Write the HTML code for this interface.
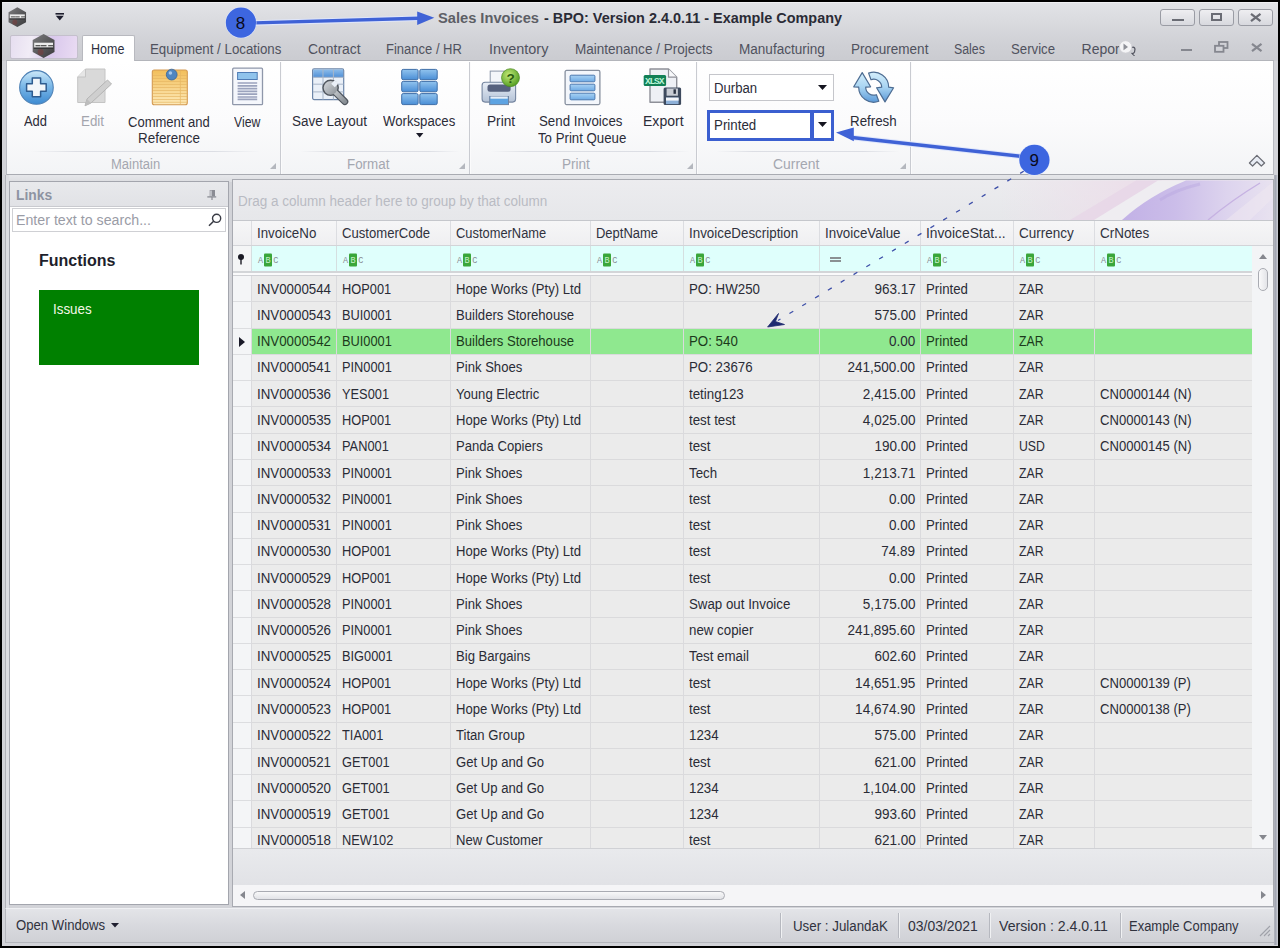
<!DOCTYPE html>
<html><head><meta charset="utf-8">
<style>
*{box-sizing:border-box;margin:0;padding:0}
html,body{width:1280px;height:948px;overflow:hidden;background:#000;font-family:"Liberation Sans",sans-serif;position:relative}
.a{position:absolute}
.t{position:absolute;white-space:nowrap}
svg{position:absolute;overflow:visible}
</style></head><body>
<div class="a" style="left:2px;top:2px;width:1276px;height:943.8px;background:#d2d3d8"></div>
<div class="a" style="left:2px;top:2px;width:1276px;height:59px;background:linear-gradient(#e2e3e7 0px,#d9dade 20px,#d0d1d6 40px,#cacbd0 59px);border-top:1px solid #f0f0f3"></div>
<div class="t" style="left:437.60px;top:10.65px;font-size:14px;line-height:14px;font-weight:bold;color:#5d5f66;transform:scaleX(1.0465);transform-origin:0 0;">Sales Invoices</div>
<div class="t" style="left:543.70px;top:10.65px;font-size:14px;line-height:14px;font-weight:bold;color:#2a2b36;transform:scaleX(1.0295);transform-origin:0 0;">- BPO: Version 2.4.0.11 - Example Company</div>
<div class="a" style="left:6px;top:60px;width:1268px;height:1px;background:#b3b5bb"></div>
<div class="a" style="left:10px;top:34.5px;width:68px;height:24px;border:1px solid #c4c0cc;border-radius:2px;background:linear-gradient(100deg,#e6def0 0%,#f1ecf6 30%,#d9c8ec 60%,#eadcf3 100%)"></div>
<div class="a" style="left:82px;top:34.7px;width:53px;height:27px;background:#fff;border:1px solid #b8b9bf;border-bottom:none;border-radius:2px 2px 0 0"></div>
<div class="t" style="left:90.60px;top:41.90px;font-size:14px;line-height:14px;font-weight:normal;color:#2e3040;transform:scaleX(0.8940);transform-origin:0 0;">Home</div>
<div class="t" style="left:150.30px;top:41.90px;font-size:14px;line-height:14px;font-weight:normal;color:#50525e;transform:scaleX(0.9478);transform-origin:0 0;">Equipment / Locations</div>
<div class="t" style="left:308.00px;top:41.90px;font-size:14px;line-height:14px;font-weight:normal;color:#50525e;transform:scaleX(0.9939);transform-origin:0 0;">Contract</div>
<div class="t" style="left:386.00px;top:41.90px;font-size:14px;line-height:14px;font-weight:normal;color:#50525e;transform:scaleX(0.9290);transform-origin:0 0;">Finance / HR</div>
<div class="t" style="left:489.40px;top:41.90px;font-size:14px;line-height:14px;font-weight:normal;color:#50525e;transform:scaleX(1.0314);transform-origin:0 0;">Inventory</div>
<div class="t" style="left:575.30px;top:41.90px;font-size:14px;line-height:14px;font-weight:normal;color:#50525e;transform:scaleX(0.9655);transform-origin:0 0;">Maintenance / Projects</div>
<div class="t" style="left:739.40px;top:41.90px;font-size:14px;line-height:14px;font-weight:normal;color:#50525e;transform:scaleX(0.9682);transform-origin:0 0;">Manufacturing</div>
<div class="t" style="left:851.00px;top:41.90px;font-size:14px;line-height:14px;font-weight:normal;color:#50525e;transform:scaleX(0.9656);transform-origin:0 0;">Procurement</div>
<div class="t" style="left:954.40px;top:41.90px;font-size:14px;line-height:14px;font-weight:normal;color:#50525e;transform:scaleX(0.8821);transform-origin:0 0;">Sales</div>
<div class="t" style="left:1011.00px;top:41.90px;font-size:14px;line-height:14px;font-weight:normal;color:#50525e;transform:scaleX(0.9424);transform-origin:0 0;">Service</div>
<div class="t" style="left:1081.60px;top:41.90px;font-size:14px;line-height:14px;font-weight:normal;color:#50525e;transform-origin:0 0;">Repor</div>
<div class="a" style="left:6px;top:61px;width:1268px;height:114px;background:linear-gradient(#ffffff 0px,#fbfbfc 60px,#f3f4f6 113px);border-left:1px solid #b9bbc2;border-right:1px solid #b9bbc2;border-bottom:1px solid #a9abb2"></div>
<div class="a" style="left:280.0px;top:62px;width:1px;height:112px;background:#c9cbd1"></div>
<div class="a" style="left:281.0px;top:62px;width:1px;height:112px;background:#fbfbfc"></div>
<div class="a" style="left:468.9px;top:62px;width:1px;height:112px;background:#c9cbd1"></div>
<div class="a" style="left:469.9px;top:62px;width:1px;height:112px;background:#fbfbfc"></div>
<div class="a" style="left:696.0px;top:62px;width:1px;height:112px;background:#c9cbd1"></div>
<div class="a" style="left:697.0px;top:62px;width:1px;height:112px;background:#fbfbfc"></div>
<div class="a" style="left:909.5px;top:62px;width:1px;height:112px;background:#c9cbd1"></div>
<div class="a" style="left:910.5px;top:62px;width:1px;height:112px;background:#fbfbfc"></div>
<div class="a" style="left:30px;top:151px;width:230px;height:1px;background:linear-gradient(90deg,rgba(220,222,228,0),#dcdee4 20%,#dcdee4 80%,rgba(220,222,228,0))"></div>
<div class="a" style="left:300px;top:151px;width:160px;height:1px;background:linear-gradient(90deg,rgba(220,222,228,0),#dcdee4 20%,#dcdee4 80%,rgba(220,222,228,0))"></div>
<div class="a" style="left:490px;top:151px;width:200px;height:1px;background:linear-gradient(90deg,rgba(220,222,228,0),#dcdee4 20%,#dcdee4 80%,rgba(220,222,228,0))"></div>
<div class="a" style="left:716px;top:151px;width:184px;height:1px;background:linear-gradient(90deg,rgba(220,222,228,0),#dcdee4 20%,#dcdee4 80%,rgba(220,222,228,0))"></div>
<div class="t" style="left:23.60px;top:113.95px;font-size:14px;line-height:14px;font-weight:normal;color:#2b2c38;transform:scaleX(0.9229);transform-origin:0 0;">Add</div>
<div class="t" style="left:80.70px;top:113.95px;font-size:14px;line-height:14px;font-weight:normal;color:#a3a5ad;transform:scaleX(0.9534);transform-origin:0 0;">Edit</div>
<div class="t" style="left:128.30px;top:114.55px;font-size:14px;line-height:14px;font-weight:normal;color:#2b2c38;transform:scaleX(0.9302);transform-origin:0 0;">Comment and</div>
<div class="t" style="left:138.10px;top:130.95px;font-size:14px;line-height:14px;font-weight:normal;color:#2b2c38;transform:scaleX(0.9583);transform-origin:0 0;">Reference</div>
<div class="t" style="left:233.50px;top:114.55px;font-size:14px;line-height:14px;font-weight:normal;color:#2b2c38;transform:scaleX(0.8739);transform-origin:0 0;">View</div>
<div class="t" style="left:110.80px;top:156.95px;font-size:14px;line-height:14px;font-weight:normal;color:#a4a7b0;transform:scaleX(0.9297);transform-origin:0 0;">Maintain</div>
<div class="t" style="left:291.70px;top:114.15px;font-size:14px;line-height:14px;font-weight:normal;color:#2b2c38;transform:scaleX(0.9635);transform-origin:0 0;">Save Layout</div>
<div class="t" style="left:383.00px;top:114.15px;font-size:14px;line-height:14px;font-weight:normal;color:#2b2c38;transform:scaleX(0.9416);transform-origin:0 0;">Workspaces</div>
<div class="t" style="left:347.00px;top:157.25px;font-size:14px;line-height:14px;font-weight:normal;color:#a4a7b0;transform:scaleX(0.9562);transform-origin:0 0;">Format</div>
<div class="t" style="left:486.50px;top:113.95px;font-size:14px;line-height:14px;font-weight:normal;color:#2b2c38;transform:scaleX(0.9758);transform-origin:0 0;">Print</div>
<div class="t" style="left:539.20px;top:113.95px;font-size:14px;line-height:14px;font-weight:normal;color:#2b2c38;transform:scaleX(0.9494);transform-origin:0 0;">Send Invoices</div>
<div class="t" style="left:538.00px;top:130.95px;font-size:14px;line-height:14px;font-weight:normal;color:#2b2c38;transform:scaleX(0.9455);transform-origin:0 0;">To Print Queue</div>
<div class="t" style="left:642.90px;top:113.95px;font-size:14px;line-height:14px;font-weight:normal;color:#2b2c38;transform:scaleX(1.0032);transform-origin:0 0;">Export</div>
<div class="t" style="left:561.60px;top:157.25px;font-size:14px;line-height:14px;font-weight:normal;color:#a4a7b0;transform:scaleX(0.9689);transform-origin:0 0;">Print</div>
<div class="t" style="left:849.60px;top:113.95px;font-size:14px;line-height:14px;font-weight:normal;color:#2b2c38;transform:scaleX(0.9525);transform-origin:0 0;">Refresh</div>
<div class="t" style="left:773.00px;top:157.25px;font-size:14px;line-height:14px;font-weight:normal;color:#a4a7b0;transform:scaleX(0.9938);transform-origin:0 0;">Current</div>
<div class="a" style="left:709px;top:74.2px;width:125px;height:26.4px;background:#fff;border:1px solid #c5c6cb"></div>
<div class="t" style="left:714.30px;top:80.65px;font-size:14px;line-height:14px;font-weight:normal;color:#2b2c38;transform:scaleX(0.9386);transform-origin:0 0;">Durban</div>
<div class="a" style="left:706.5px;top:109.6px;width:127.3px;height:31.4px;background:#fff;border:3px solid #3b5fd0"></div>
<div class="a" style="left:810.4px;top:110px;width:3.6px;height:30px;background:#3b5fd0"></div>
<div class="t" style="left:714.30px;top:118.15px;font-size:14px;line-height:14px;font-weight:normal;color:#2b2c38;transform:scaleX(0.9513);transform-origin:0 0;">Printed</div>
<svg style="left:818px;top:84.5px" width="10" height="6"><path d="M0 0H9L4.5 5Z" fill="#15151f"/></svg>
<svg style="left:818px;top:122px" width="10" height="6"><path d="M0 0H9L4.5 5Z" fill="#15151f"/></svg>
<div class="a" style="left:6px;top:175px;width:1268px;height:7px;background:linear-gradient(#e6e7ea,#dcdde1)"></div>
<div class="a" style="left:5px;top:175px;width:1px;height:733px;background:#b0b2b8"></div>
<div class="a" style="left:6px;top:175px;width:3.4px;height:733px;background:#dcdde2"></div>
<div class="a" style="left:1274px;top:175px;width:4px;height:770px;background:linear-gradient(90deg,#b4b6be,#a2a6b2 40%,#cfd1d8)"></div>
<div class="a" style="left:9.4px;top:181.4px;width:219.6px;height:724px;background:#fff;border:1px solid #a3a5ad"></div>
<div class="a" style="left:10.4px;top:182.4px;width:217.6px;height:25px;background:linear-gradient(#e8e9ec,#e1e2e6);border-bottom:1px solid #c9cacf"></div>
<div class="t" style="left:16.40px;top:187.75px;font-size:14px;line-height:14px;font-weight:bold;color:#8d93a2;transform:scaleX(0.9869);transform-origin:0 0;">Links</div>
<div class="a" style="left:11.7px;top:208px;width:214.5px;height:23.5px;background:#fff;border:1px solid #cfd0d4"></div>
<div class="t" style="left:16.00px;top:212.85px;font-size:14px;line-height:14px;font-weight:normal;color:#9a9ca6;transform:scaleX(1.0146);transform-origin:0 0;">Enter text to search...</div>
<div class="t" style="left:38.50px;top:252.66px;font-size:16px;line-height:16px;font-weight:bold;color:#1e1f2c;transform:scaleX(1.0008);transform-origin:0 0;">Functions</div>
<div class="a" style="left:38.8px;top:289.9px;width:160px;height:74.8px;background:#008000"></div>
<div class="t" style="left:53.30px;top:301.95px;font-size:14px;line-height:14px;font-weight:normal;color:#f4f7e6;transform:scaleX(0.9563);transform-origin:0 0;">Issues</div>
<div class="a" style="left:5px;top:908.4px;width:1269px;height:34.4px;background:linear-gradient(#e3e4e8,#d6d7dc 60%,#d0d1d6);border-top:1px solid #eff0f3;border-left:1px solid #b4b6bc;border-bottom:1px solid #b4b6bc"></div>
<div class="t" style="left:15.80px;top:918.25px;font-size:14px;line-height:14px;font-weight:normal;color:#30323e;transform:scaleX(0.9396);transform-origin:0 0;">Open Windows</div>
<svg style="left:110.5px;top:922.5px" width="9" height="6"><path d="M0 0H8L4 4.5Z" fill="#202030"/></svg>
<div class="a" style="left:231.6px;top:179.4px;width:1042.6px;height:727.6px;background:#e9e9ec;border:1px solid #a8aab1"></div>
<div class="a" style="left:232.6px;top:180.4px;width:1040.6px;height:40px;background:linear-gradient(#ececef,#e6e7ea)"></div>
<svg style="left:0;top:0" width="1280" height="230">
<defs><linearGradient id="pk" x1="0" y1="0" x2="1" y2="0"><stop offset="0" stop-color="#ecdfea" stop-opacity="0"/><stop offset="0.5" stop-color="#ecdfea"/><stop offset="1" stop-color="#ece2ee"/></linearGradient>
<linearGradient id="pu" x1="1122" y1="0" x2="1273" y2="0" gradientUnits="userSpaceOnUse"><stop offset="0" stop-color="#c2b1e6"/><stop offset="0.35" stop-color="#cbbde9"/><stop offset="0.7" stop-color="#ddd4ee"/><stop offset="1" stop-color="#e8e2f0"/></linearGradient></defs>
<rect x="1000" y="180.4" width="273" height="39.6" fill="url(#pk)"/>
<polygon points="1070,220 1096,220 1162,180.4 1136,180.4" fill="#e6d2e6" opacity="0.55"/>
<polygon points="1094,220 1122,220 1186,180.4 1158,180.4" fill="#efedf1"/>
<path d="M1122 220 Q1148 196 1186 180.4 L1273 180.4 L1273 220 Z" fill="url(#pu)"/>
<path d="M1160 200 Q1175 190 1200 184" stroke="#b9a6e0" stroke-width="3" fill="none" opacity="0.45"/>
<path d="M1208 220 Q1232 200 1260 183" stroke="#c6b2e2" stroke-width="1.4" fill="none"/>
<polygon points="1226,220 1250,220 1273,198 1273,182" fill="#efe8f1" opacity="0.55"/>
</svg>
<div class="t" style="left:238.00px;top:194.15px;font-size:14px;line-height:14px;font-weight:normal;color:#b9bbc3;transform:scaleX(0.9646);transform-origin:0 0;">Drag a column header here to group by that column</div>
<div class="a" style="left:232.6px;top:220px;width:1040.6px;height:1px;background:#c5c7cc"></div>
<div class="a" style="left:232.6px;top:221px;width:1040.6px;height:24px;background:linear-gradient(#f6f6f7,#efeff1)"></div>
<div class="a" style="left:232.6px;top:244.8px;width:1040.6px;height:1px;background:#d3d4d8"></div>
<div class="t" style="left:257.30px;top:226.05px;font-size:14px;line-height:14px;font-weight:normal;color:#30323e;transform:scaleX(0.9524);transform-origin:0 0;">InvoiceNo</div>
<div class="t" style="left:342.40px;top:226.05px;font-size:14px;line-height:14px;font-weight:normal;color:#30323e;transform:scaleX(0.9357);transform-origin:0 0;">CustomerCode</div>
<div class="t" style="left:455.80px;top:226.05px;font-size:14px;line-height:14px;font-weight:normal;color:#30323e;transform:scaleX(0.9201);transform-origin:0 0;">CustomerName</div>
<div class="t" style="left:596.10px;top:226.05px;font-size:14px;line-height:14px;font-weight:normal;color:#30323e;transform:scaleX(0.9265);transform-origin:0 0;">DeptName</div>
<div class="t" style="left:689.40px;top:226.05px;font-size:14px;line-height:14px;font-weight:normal;color:#30323e;transform:scaleX(0.9546);transform-origin:0 0;">InvoiceDescription</div>
<div class="t" style="left:824.80px;top:226.05px;font-size:14px;line-height:14px;font-weight:normal;color:#30323e;transform:scaleX(0.9540);transform-origin:0 0;">InvoiceValue</div>
<div class="t" style="left:926.10px;top:226.05px;font-size:14px;line-height:14px;font-weight:normal;color:#30323e;transform:scaleX(0.9835);transform-origin:0 0;">InvoiceStat...</div>
<div class="t" style="left:1019.40px;top:226.05px;font-size:14px;line-height:14px;font-weight:normal;color:#30323e;transform:scaleX(0.9648);transform-origin:0 0;">Currency</div>
<div class="t" style="left:1099.60px;top:226.05px;font-size:14px;line-height:14px;font-weight:normal;color:#30323e;transform:scaleX(0.9599);transform-origin:0 0;">CrNotes</div>
<div class="a" style="left:251.2px;top:221px;width:1px;height:24px;background:#dcdde1"></div>
<div class="a" style="left:336.3px;top:221px;width:1px;height:24px;background:#dcdde1"></div>
<div class="a" style="left:449.7px;top:221px;width:1px;height:24px;background:#dcdde1"></div>
<div class="a" style="left:590.0px;top:221px;width:1px;height:24px;background:#dcdde1"></div>
<div class="a" style="left:683.3px;top:221px;width:1px;height:24px;background:#dcdde1"></div>
<div class="a" style="left:818.7px;top:221px;width:1px;height:24px;background:#dcdde1"></div>
<div class="a" style="left:920.0px;top:221px;width:1px;height:24px;background:#dcdde1"></div>
<div class="a" style="left:1013.3px;top:221px;width:1px;height:24px;background:#dcdde1"></div>
<div class="a" style="left:1093.5px;top:221px;width:1px;height:24px;background:#dcdde1"></div>
<div class="a" style="left:232.6px;top:245.8px;width:1019.7px;height:25.2px;background:#dffffc"></div>
<div class="a" style="left:232.6px;top:245.8px;width:19px;height:25.2px;background:#f4f5f6"></div>
<div class="a" style="left:251.2px;top:245.8px;width:1px;height:25.2px;background:#d5dfe0"></div>
<div class="a" style="left:336.3px;top:245.8px;width:1px;height:25.2px;background:#d5dfe0"></div>
<div class="a" style="left:449.7px;top:245.8px;width:1px;height:25.2px;background:#d5dfe0"></div>
<div class="a" style="left:590.0px;top:245.8px;width:1px;height:25.2px;background:#d5dfe0"></div>
<div class="a" style="left:683.3px;top:245.8px;width:1px;height:25.2px;background:#d5dfe0"></div>
<div class="a" style="left:818.7px;top:245.8px;width:1px;height:25.2px;background:#d5dfe0"></div>
<div class="a" style="left:920.0px;top:245.8px;width:1px;height:25.2px;background:#d5dfe0"></div>
<div class="a" style="left:1013.3px;top:245.8px;width:1px;height:25.2px;background:#d5dfe0"></div>
<div class="a" style="left:1093.5px;top:245.8px;width:1px;height:25.2px;background:#d5dfe0"></div>
<div class="a" style="left:232.6px;top:271px;width:1019.7px;height:5.3px;background:#fafafb;border-top:2.6px solid #d3d5d8;border-bottom:1px solid #d0d1d5"></div>
<svg style="left:237px;top:254px" width="8" height="11"><circle cx="4" cy="3" r="3" fill="#1a1a24"/><path d="M3.3 5 H4.7 V10 L4 11 L3.3 10Z" fill="#1a1a24"/></svg>
<svg style="left:258.2px;top:253px" width="22" height="14" viewBox="0 0 22 14"><text x="0" y="10.3" font-family="Liberation Mono" font-size="8.5" fill="#8a8c92">A</text><rect x="6" y="0.5" width="8" height="13" rx="1" fill="#3aa63a"/><text x="7.4" y="10.3" font-family="Liberation Mono" font-size="8.5" fill="#c8f0c8">B</text><text x="15.2" y="10.3" font-family="Liberation Mono" font-size="8.5" fill="#8a8c92">C</text></svg>
<svg style="left:343.3px;top:253px" width="22" height="14" viewBox="0 0 22 14"><text x="0" y="10.3" font-family="Liberation Mono" font-size="8.5" fill="#8a8c92">A</text><rect x="6" y="0.5" width="8" height="13" rx="1" fill="#3aa63a"/><text x="7.4" y="10.3" font-family="Liberation Mono" font-size="8.5" fill="#c8f0c8">B</text><text x="15.2" y="10.3" font-family="Liberation Mono" font-size="8.5" fill="#8a8c92">C</text></svg>
<svg style="left:456.7px;top:253px" width="22" height="14" viewBox="0 0 22 14"><text x="0" y="10.3" font-family="Liberation Mono" font-size="8.5" fill="#8a8c92">A</text><rect x="6" y="0.5" width="8" height="13" rx="1" fill="#3aa63a"/><text x="7.4" y="10.3" font-family="Liberation Mono" font-size="8.5" fill="#c8f0c8">B</text><text x="15.2" y="10.3" font-family="Liberation Mono" font-size="8.5" fill="#8a8c92">C</text></svg>
<svg style="left:597.0px;top:253px" width="22" height="14" viewBox="0 0 22 14"><text x="0" y="10.3" font-family="Liberation Mono" font-size="8.5" fill="#8a8c92">A</text><rect x="6" y="0.5" width="8" height="13" rx="1" fill="#3aa63a"/><text x="7.4" y="10.3" font-family="Liberation Mono" font-size="8.5" fill="#c8f0c8">B</text><text x="15.2" y="10.3" font-family="Liberation Mono" font-size="8.5" fill="#8a8c92">C</text></svg>
<svg style="left:690.3px;top:253px" width="22" height="14" viewBox="0 0 22 14"><text x="0" y="10.3" font-family="Liberation Mono" font-size="8.5" fill="#8a8c92">A</text><rect x="6" y="0.5" width="8" height="13" rx="1" fill="#3aa63a"/><text x="7.4" y="10.3" font-family="Liberation Mono" font-size="8.5" fill="#c8f0c8">B</text><text x="15.2" y="10.3" font-family="Liberation Mono" font-size="8.5" fill="#8a8c92">C</text></svg>
<div class="a" style="left:829.8px;top:257.3px;width:11.3px;height:1.6px;background:#8a9092"></div>
<div class="a" style="left:829.8px;top:260.1px;width:11.3px;height:1.6px;background:#8a9092"></div>
<svg style="left:927.0px;top:253px" width="22" height="14" viewBox="0 0 22 14"><text x="0" y="10.3" font-family="Liberation Mono" font-size="8.5" fill="#8a8c92">A</text><rect x="6" y="0.5" width="8" height="13" rx="1" fill="#3aa63a"/><text x="7.4" y="10.3" font-family="Liberation Mono" font-size="8.5" fill="#c8f0c8">B</text><text x="15.2" y="10.3" font-family="Liberation Mono" font-size="8.5" fill="#8a8c92">C</text></svg>
<svg style="left:1020.3px;top:253px" width="22" height="14" viewBox="0 0 22 14"><text x="0" y="10.3" font-family="Liberation Mono" font-size="8.5" fill="#8a8c92">A</text><rect x="6" y="0.5" width="8" height="13" rx="1" fill="#3aa63a"/><text x="7.4" y="10.3" font-family="Liberation Mono" font-size="8.5" fill="#c8f0c8">B</text><text x="15.2" y="10.3" font-family="Liberation Mono" font-size="8.5" fill="#8a8c92">C</text></svg>
<svg style="left:1100.5px;top:253px" width="22" height="14" viewBox="0 0 22 14"><text x="0" y="10.3" font-family="Liberation Mono" font-size="8.5" fill="#8a8c92">A</text><rect x="6" y="0.5" width="8" height="13" rx="1" fill="#3aa63a"/><text x="7.4" y="10.3" font-family="Liberation Mono" font-size="8.5" fill="#c8f0c8">B</text><text x="15.2" y="10.3" font-family="Liberation Mono" font-size="8.5" fill="#8a8c92">C</text></svg>
<div class="a" style="left:232.6px;top:275.6px;width:1019.7px;height:572.6px;overflow:hidden">
<div class="a" style="left:0;top:0.50px;width:19.1px;height:26.27px;background:#f4f5f7;border-bottom:1px solid #dcdde0"></div>
<div class="a" style="left:19.1px;top:0.50px;width:1000.6px;height:26.27px;background:#ebebeb;border-bottom:1px solid #dadadc"></div>
<div class="a" style="left:0;top:26.77px;width:19.1px;height:26.27px;background:#f4f5f7;border-bottom:1px solid #dcdde0"></div>
<div class="a" style="left:19.1px;top:26.77px;width:1000.6px;height:26.27px;background:#ebebeb;border-bottom:1px solid #dadadc"></div>
<div class="a" style="left:0;top:53.04px;width:19.1px;height:26.27px;background:#f4f5f7;border-bottom:1px solid #dcdde0"></div>
<div class="a" style="left:19.1px;top:53.04px;width:1000.6px;height:26.27px;background:#8fe88f;border-bottom:1px solid #dadadc"></div>
<div class="a" style="left:0;top:79.31px;width:19.1px;height:26.27px;background:#f4f5f7;border-bottom:1px solid #dcdde0"></div>
<div class="a" style="left:19.1px;top:79.31px;width:1000.6px;height:26.27px;background:#ebebeb;border-bottom:1px solid #dadadc"></div>
<div class="a" style="left:0;top:105.58px;width:19.1px;height:26.27px;background:#f4f5f7;border-bottom:1px solid #dcdde0"></div>
<div class="a" style="left:19.1px;top:105.58px;width:1000.6px;height:26.27px;background:#ebebeb;border-bottom:1px solid #dadadc"></div>
<div class="a" style="left:0;top:131.85px;width:19.1px;height:26.27px;background:#f4f5f7;border-bottom:1px solid #dcdde0"></div>
<div class="a" style="left:19.1px;top:131.85px;width:1000.6px;height:26.27px;background:#ebebeb;border-bottom:1px solid #dadadc"></div>
<div class="a" style="left:0;top:158.12px;width:19.1px;height:26.27px;background:#f4f5f7;border-bottom:1px solid #dcdde0"></div>
<div class="a" style="left:19.1px;top:158.12px;width:1000.6px;height:26.27px;background:#ebebeb;border-bottom:1px solid #dadadc"></div>
<div class="a" style="left:0;top:184.39px;width:19.1px;height:26.27px;background:#f4f5f7;border-bottom:1px solid #dcdde0"></div>
<div class="a" style="left:19.1px;top:184.39px;width:1000.6px;height:26.27px;background:#ebebeb;border-bottom:1px solid #dadadc"></div>
<div class="a" style="left:0;top:210.66px;width:19.1px;height:26.27px;background:#f4f5f7;border-bottom:1px solid #dcdde0"></div>
<div class="a" style="left:19.1px;top:210.66px;width:1000.6px;height:26.27px;background:#ebebeb;border-bottom:1px solid #dadadc"></div>
<div class="a" style="left:0;top:236.93px;width:19.1px;height:26.27px;background:#f4f5f7;border-bottom:1px solid #dcdde0"></div>
<div class="a" style="left:19.1px;top:236.93px;width:1000.6px;height:26.27px;background:#ebebeb;border-bottom:1px solid #dadadc"></div>
<div class="a" style="left:0;top:263.20px;width:19.1px;height:26.27px;background:#f4f5f7;border-bottom:1px solid #dcdde0"></div>
<div class="a" style="left:19.1px;top:263.20px;width:1000.6px;height:26.27px;background:#ebebeb;border-bottom:1px solid #dadadc"></div>
<div class="a" style="left:0;top:289.47px;width:19.1px;height:26.27px;background:#f4f5f7;border-bottom:1px solid #dcdde0"></div>
<div class="a" style="left:19.1px;top:289.47px;width:1000.6px;height:26.27px;background:#ebebeb;border-bottom:1px solid #dadadc"></div>
<div class="a" style="left:0;top:315.74px;width:19.1px;height:26.27px;background:#f4f5f7;border-bottom:1px solid #dcdde0"></div>
<div class="a" style="left:19.1px;top:315.74px;width:1000.6px;height:26.27px;background:#ebebeb;border-bottom:1px solid #dadadc"></div>
<div class="a" style="left:0;top:342.01px;width:19.1px;height:26.27px;background:#f4f5f7;border-bottom:1px solid #dcdde0"></div>
<div class="a" style="left:19.1px;top:342.01px;width:1000.6px;height:26.27px;background:#ebebeb;border-bottom:1px solid #dadadc"></div>
<div class="a" style="left:0;top:368.28px;width:19.1px;height:26.27px;background:#f4f5f7;border-bottom:1px solid #dcdde0"></div>
<div class="a" style="left:19.1px;top:368.28px;width:1000.6px;height:26.27px;background:#ebebeb;border-bottom:1px solid #dadadc"></div>
<div class="a" style="left:0;top:394.55px;width:19.1px;height:26.27px;background:#f4f5f7;border-bottom:1px solid #dcdde0"></div>
<div class="a" style="left:19.1px;top:394.55px;width:1000.6px;height:26.27px;background:#ebebeb;border-bottom:1px solid #dadadc"></div>
<div class="a" style="left:0;top:420.82px;width:19.1px;height:26.27px;background:#f4f5f7;border-bottom:1px solid #dcdde0"></div>
<div class="a" style="left:19.1px;top:420.82px;width:1000.6px;height:26.27px;background:#ebebeb;border-bottom:1px solid #dadadc"></div>
<div class="a" style="left:0;top:447.09px;width:19.1px;height:26.27px;background:#f4f5f7;border-bottom:1px solid #dcdde0"></div>
<div class="a" style="left:19.1px;top:447.09px;width:1000.6px;height:26.27px;background:#ebebeb;border-bottom:1px solid #dadadc"></div>
<div class="a" style="left:0;top:473.36px;width:19.1px;height:26.27px;background:#f4f5f7;border-bottom:1px solid #dcdde0"></div>
<div class="a" style="left:19.1px;top:473.36px;width:1000.6px;height:26.27px;background:#ebebeb;border-bottom:1px solid #dadadc"></div>
<div class="a" style="left:0;top:499.63px;width:19.1px;height:26.27px;background:#f4f5f7;border-bottom:1px solid #dcdde0"></div>
<div class="a" style="left:19.1px;top:499.63px;width:1000.6px;height:26.27px;background:#ebebeb;border-bottom:1px solid #dadadc"></div>
<div class="a" style="left:0;top:525.90px;width:19.1px;height:26.27px;background:#f4f5f7;border-bottom:1px solid #dcdde0"></div>
<div class="a" style="left:19.1px;top:525.90px;width:1000.6px;height:26.27px;background:#ebebeb;border-bottom:1px solid #dadadc"></div>
<div class="a" style="left:0;top:552.17px;width:19.1px;height:26.27px;background:#f4f5f7;border-bottom:1px solid #dcdde0"></div>
<div class="a" style="left:19.1px;top:552.17px;width:1000.6px;height:26.27px;background:#ebebeb;border-bottom:1px solid #dadadc"></div>
</div>
<div class="a" style="left:251.2px;top:275.6px;width:1px;height:572.6px;background:#dadadd"></div>
<div class="a" style="left:336.3px;top:275.6px;width:1px;height:572.6px;background:#dadadd"></div>
<div class="a" style="left:449.7px;top:275.6px;width:1px;height:572.6px;background:#dadadd"></div>
<div class="a" style="left:590.0px;top:275.6px;width:1px;height:572.6px;background:#dadadd"></div>
<div class="a" style="left:683.3px;top:275.6px;width:1px;height:572.6px;background:#dadadd"></div>
<div class="a" style="left:818.7px;top:275.6px;width:1px;height:572.6px;background:#dadadd"></div>
<div class="a" style="left:920.0px;top:275.6px;width:1px;height:572.6px;background:#dadadd"></div>
<div class="a" style="left:1013.3px;top:275.6px;width:1px;height:572.6px;background:#dadadd"></div>
<div class="a" style="left:1093.5px;top:275.6px;width:1px;height:572.6px;background:#dadadd"></div>
<div class="t" style="left:257.30px;top:281.65px;font-size:14px;line-height:14px;font-weight:normal;color:#2a2b36;transform-origin:0 0;transform:scaleX(0.951);">INV0000544</div>
<div class="t" style="left:342.40px;top:281.65px;font-size:14px;line-height:14px;font-weight:normal;color:#2a2b36;transform-origin:0 0;transform:scaleX(0.915);">HOP001</div>
<div class="t" style="left:455.80px;top:281.65px;font-size:14px;line-height:14px;font-weight:normal;color:#2a2b36;transform-origin:0 0;transform:scaleX(0.936);">Hope Works (Pty) Ltd</div>
<div class="t" style="left:689.40px;top:281.65px;font-size:14px;line-height:14px;font-weight:normal;color:#2a2b36;transform-origin:0 0;transform:scaleX(0.95);">PO: HW250</div>
<div class="t" style="right:364.50px;top:281.65px;font-size:14px;line-height:14px;font-weight:normal;color:#2a2b36;transform-origin:100% 0;transform:scaleX(0.966);">963.17</div>
<div class="t" style="left:926.10px;top:281.65px;font-size:14px;line-height:14px;font-weight:normal;color:#2a2b36;transform-origin:0 0;transform:scaleX(0.946);">Printed</div>
<div class="t" style="left:1019.40px;top:281.65px;font-size:14px;line-height:14px;font-weight:normal;color:#2a2b36;transform-origin:0 0;transform:scaleX(0.875);">ZAR</div>
<div class="t" style="left:257.30px;top:307.92px;font-size:14px;line-height:14px;font-weight:normal;color:#2a2b36;transform-origin:0 0;transform:scaleX(0.951);">INV0000543</div>
<div class="t" style="left:342.40px;top:307.92px;font-size:14px;line-height:14px;font-weight:normal;color:#2a2b36;transform-origin:0 0;transform:scaleX(0.915);">BUI0001</div>
<div class="t" style="left:455.80px;top:307.92px;font-size:14px;line-height:14px;font-weight:normal;color:#2a2b36;transform-origin:0 0;transform:scaleX(0.936);">Builders Storehouse</div>
<div class="t" style="right:364.50px;top:307.92px;font-size:14px;line-height:14px;font-weight:normal;color:#2a2b36;transform-origin:100% 0;transform:scaleX(0.966);">575.00</div>
<div class="t" style="left:926.10px;top:307.92px;font-size:14px;line-height:14px;font-weight:normal;color:#2a2b36;transform-origin:0 0;transform:scaleX(0.946);">Printed</div>
<div class="t" style="left:1019.40px;top:307.92px;font-size:14px;line-height:14px;font-weight:normal;color:#2a2b36;transform-origin:0 0;transform:scaleX(0.875);">ZAR</div>
<div class="t" style="left:257.30px;top:334.19px;font-size:14px;line-height:14px;font-weight:normal;color:#1c3a1c;transform-origin:0 0;transform:scaleX(0.951);">INV0000542</div>
<div class="t" style="left:342.40px;top:334.19px;font-size:14px;line-height:14px;font-weight:normal;color:#1c3a1c;transform-origin:0 0;transform:scaleX(0.915);">BUI0001</div>
<div class="t" style="left:455.80px;top:334.19px;font-size:14px;line-height:14px;font-weight:normal;color:#1c3a1c;transform-origin:0 0;transform:scaleX(0.936);">Builders Storehouse</div>
<div class="t" style="left:689.40px;top:334.19px;font-size:14px;line-height:14px;font-weight:normal;color:#1c3a1c;transform-origin:0 0;transform:scaleX(0.95);">PO: 540</div>
<div class="t" style="right:364.50px;top:334.19px;font-size:14px;line-height:14px;font-weight:normal;color:#2a2b36;transform-origin:100% 0;transform:scaleX(0.966);">0.00</div>
<div class="t" style="left:926.10px;top:334.19px;font-size:14px;line-height:14px;font-weight:normal;color:#1c3a1c;transform-origin:0 0;transform:scaleX(0.946);">Printed</div>
<div class="t" style="left:1019.40px;top:334.19px;font-size:14px;line-height:14px;font-weight:normal;color:#1c3a1c;transform-origin:0 0;transform:scaleX(0.875);">ZAR</div>
<div class="t" style="left:257.30px;top:360.46px;font-size:14px;line-height:14px;font-weight:normal;color:#2a2b36;transform-origin:0 0;transform:scaleX(0.951);">INV0000541</div>
<div class="t" style="left:342.40px;top:360.46px;font-size:14px;line-height:14px;font-weight:normal;color:#2a2b36;transform-origin:0 0;transform:scaleX(0.915);">PIN0001</div>
<div class="t" style="left:455.80px;top:360.46px;font-size:14px;line-height:14px;font-weight:normal;color:#2a2b36;transform-origin:0 0;transform:scaleX(0.936);">Pink Shoes</div>
<div class="t" style="left:689.40px;top:360.46px;font-size:14px;line-height:14px;font-weight:normal;color:#2a2b36;transform-origin:0 0;transform:scaleX(0.95);">PO: 23676</div>
<div class="t" style="right:364.50px;top:360.46px;font-size:14px;line-height:14px;font-weight:normal;color:#2a2b36;transform-origin:100% 0;transform:scaleX(0.966);">241,500.00</div>
<div class="t" style="left:926.10px;top:360.46px;font-size:14px;line-height:14px;font-weight:normal;color:#2a2b36;transform-origin:0 0;transform:scaleX(0.946);">Printed</div>
<div class="t" style="left:1019.40px;top:360.46px;font-size:14px;line-height:14px;font-weight:normal;color:#2a2b36;transform-origin:0 0;transform:scaleX(0.875);">ZAR</div>
<div class="t" style="left:257.30px;top:386.73px;font-size:14px;line-height:14px;font-weight:normal;color:#2a2b36;transform-origin:0 0;transform:scaleX(0.951);">INV0000536</div>
<div class="t" style="left:342.40px;top:386.73px;font-size:14px;line-height:14px;font-weight:normal;color:#2a2b36;transform-origin:0 0;transform:scaleX(0.915);">YES001</div>
<div class="t" style="left:455.80px;top:386.73px;font-size:14px;line-height:14px;font-weight:normal;color:#2a2b36;transform-origin:0 0;transform:scaleX(0.936);">Young Electric</div>
<div class="t" style="left:689.40px;top:386.73px;font-size:14px;line-height:14px;font-weight:normal;color:#2a2b36;transform-origin:0 0;transform:scaleX(0.95);">teting123</div>
<div class="t" style="right:364.50px;top:386.73px;font-size:14px;line-height:14px;font-weight:normal;color:#2a2b36;transform-origin:100% 0;transform:scaleX(0.966);">2,415.00</div>
<div class="t" style="left:926.10px;top:386.73px;font-size:14px;line-height:14px;font-weight:normal;color:#2a2b36;transform-origin:0 0;transform:scaleX(0.946);">Printed</div>
<div class="t" style="left:1019.40px;top:386.73px;font-size:14px;line-height:14px;font-weight:normal;color:#2a2b36;transform-origin:0 0;transform:scaleX(0.875);">ZAR</div>
<div class="t" style="left:1099.60px;top:386.73px;font-size:14px;line-height:14px;font-weight:normal;color:#2a2b36;transform-origin:0 0;transform:scaleX(0.935);">CN0000144 (N)</div>
<div class="t" style="left:257.30px;top:413.00px;font-size:14px;line-height:14px;font-weight:normal;color:#2a2b36;transform-origin:0 0;transform:scaleX(0.951);">INV0000535</div>
<div class="t" style="left:342.40px;top:413.00px;font-size:14px;line-height:14px;font-weight:normal;color:#2a2b36;transform-origin:0 0;transform:scaleX(0.915);">HOP001</div>
<div class="t" style="left:455.80px;top:413.00px;font-size:14px;line-height:14px;font-weight:normal;color:#2a2b36;transform-origin:0 0;transform:scaleX(0.936);">Hope Works (Pty) Ltd</div>
<div class="t" style="left:689.40px;top:413.00px;font-size:14px;line-height:14px;font-weight:normal;color:#2a2b36;transform-origin:0 0;transform:scaleX(0.95);">test test</div>
<div class="t" style="right:364.50px;top:413.00px;font-size:14px;line-height:14px;font-weight:normal;color:#2a2b36;transform-origin:100% 0;transform:scaleX(0.966);">4,025.00</div>
<div class="t" style="left:926.10px;top:413.00px;font-size:14px;line-height:14px;font-weight:normal;color:#2a2b36;transform-origin:0 0;transform:scaleX(0.946);">Printed</div>
<div class="t" style="left:1019.40px;top:413.00px;font-size:14px;line-height:14px;font-weight:normal;color:#2a2b36;transform-origin:0 0;transform:scaleX(0.875);">ZAR</div>
<div class="t" style="left:1099.60px;top:413.00px;font-size:14px;line-height:14px;font-weight:normal;color:#2a2b36;transform-origin:0 0;transform:scaleX(0.935);">CN0000143 (N)</div>
<div class="t" style="left:257.30px;top:439.27px;font-size:14px;line-height:14px;font-weight:normal;color:#2a2b36;transform-origin:0 0;transform:scaleX(0.951);">INV0000534</div>
<div class="t" style="left:342.40px;top:439.27px;font-size:14px;line-height:14px;font-weight:normal;color:#2a2b36;transform-origin:0 0;transform:scaleX(0.915);">PAN001</div>
<div class="t" style="left:455.80px;top:439.27px;font-size:14px;line-height:14px;font-weight:normal;color:#2a2b36;transform-origin:0 0;transform:scaleX(0.936);">Panda Copiers</div>
<div class="t" style="left:689.40px;top:439.27px;font-size:14px;line-height:14px;font-weight:normal;color:#2a2b36;transform-origin:0 0;transform:scaleX(0.95);">test</div>
<div class="t" style="right:364.50px;top:439.27px;font-size:14px;line-height:14px;font-weight:normal;color:#2a2b36;transform-origin:100% 0;transform:scaleX(0.966);">190.00</div>
<div class="t" style="left:926.10px;top:439.27px;font-size:14px;line-height:14px;font-weight:normal;color:#2a2b36;transform-origin:0 0;transform:scaleX(0.946);">Printed</div>
<div class="t" style="left:1019.40px;top:439.27px;font-size:14px;line-height:14px;font-weight:normal;color:#2a2b36;transform-origin:0 0;transform:scaleX(0.875);">USD</div>
<div class="t" style="left:1099.60px;top:439.27px;font-size:14px;line-height:14px;font-weight:normal;color:#2a2b36;transform-origin:0 0;transform:scaleX(0.935);">CN0000145 (N)</div>
<div class="t" style="left:257.30px;top:465.54px;font-size:14px;line-height:14px;font-weight:normal;color:#2a2b36;transform-origin:0 0;transform:scaleX(0.951);">INV0000533</div>
<div class="t" style="left:342.40px;top:465.54px;font-size:14px;line-height:14px;font-weight:normal;color:#2a2b36;transform-origin:0 0;transform:scaleX(0.915);">PIN0001</div>
<div class="t" style="left:455.80px;top:465.54px;font-size:14px;line-height:14px;font-weight:normal;color:#2a2b36;transform-origin:0 0;transform:scaleX(0.936);">Pink Shoes</div>
<div class="t" style="left:689.40px;top:465.54px;font-size:14px;line-height:14px;font-weight:normal;color:#2a2b36;transform-origin:0 0;transform:scaleX(0.95);">Tech</div>
<div class="t" style="right:364.50px;top:465.54px;font-size:14px;line-height:14px;font-weight:normal;color:#2a2b36;transform-origin:100% 0;transform:scaleX(0.966);">1,213.71</div>
<div class="t" style="left:926.10px;top:465.54px;font-size:14px;line-height:14px;font-weight:normal;color:#2a2b36;transform-origin:0 0;transform:scaleX(0.946);">Printed</div>
<div class="t" style="left:1019.40px;top:465.54px;font-size:14px;line-height:14px;font-weight:normal;color:#2a2b36;transform-origin:0 0;transform:scaleX(0.875);">ZAR</div>
<div class="t" style="left:257.30px;top:491.81px;font-size:14px;line-height:14px;font-weight:normal;color:#2a2b36;transform-origin:0 0;transform:scaleX(0.951);">INV0000532</div>
<div class="t" style="left:342.40px;top:491.81px;font-size:14px;line-height:14px;font-weight:normal;color:#2a2b36;transform-origin:0 0;transform:scaleX(0.915);">PIN0001</div>
<div class="t" style="left:455.80px;top:491.81px;font-size:14px;line-height:14px;font-weight:normal;color:#2a2b36;transform-origin:0 0;transform:scaleX(0.936);">Pink Shoes</div>
<div class="t" style="left:689.40px;top:491.81px;font-size:14px;line-height:14px;font-weight:normal;color:#2a2b36;transform-origin:0 0;transform:scaleX(0.95);">test</div>
<div class="t" style="right:364.50px;top:491.81px;font-size:14px;line-height:14px;font-weight:normal;color:#2a2b36;transform-origin:100% 0;transform:scaleX(0.966);">0.00</div>
<div class="t" style="left:926.10px;top:491.81px;font-size:14px;line-height:14px;font-weight:normal;color:#2a2b36;transform-origin:0 0;transform:scaleX(0.946);">Printed</div>
<div class="t" style="left:1019.40px;top:491.81px;font-size:14px;line-height:14px;font-weight:normal;color:#2a2b36;transform-origin:0 0;transform:scaleX(0.875);">ZAR</div>
<div class="t" style="left:257.30px;top:518.08px;font-size:14px;line-height:14px;font-weight:normal;color:#2a2b36;transform-origin:0 0;transform:scaleX(0.951);">INV0000531</div>
<div class="t" style="left:342.40px;top:518.08px;font-size:14px;line-height:14px;font-weight:normal;color:#2a2b36;transform-origin:0 0;transform:scaleX(0.915);">PIN0001</div>
<div class="t" style="left:455.80px;top:518.08px;font-size:14px;line-height:14px;font-weight:normal;color:#2a2b36;transform-origin:0 0;transform:scaleX(0.936);">Pink Shoes</div>
<div class="t" style="left:689.40px;top:518.08px;font-size:14px;line-height:14px;font-weight:normal;color:#2a2b36;transform-origin:0 0;transform:scaleX(0.95);">test</div>
<div class="t" style="right:364.50px;top:518.08px;font-size:14px;line-height:14px;font-weight:normal;color:#2a2b36;transform-origin:100% 0;transform:scaleX(0.966);">0.00</div>
<div class="t" style="left:926.10px;top:518.08px;font-size:14px;line-height:14px;font-weight:normal;color:#2a2b36;transform-origin:0 0;transform:scaleX(0.946);">Printed</div>
<div class="t" style="left:1019.40px;top:518.08px;font-size:14px;line-height:14px;font-weight:normal;color:#2a2b36;transform-origin:0 0;transform:scaleX(0.875);">ZAR</div>
<div class="t" style="left:257.30px;top:544.35px;font-size:14px;line-height:14px;font-weight:normal;color:#2a2b36;transform-origin:0 0;transform:scaleX(0.951);">INV0000530</div>
<div class="t" style="left:342.40px;top:544.35px;font-size:14px;line-height:14px;font-weight:normal;color:#2a2b36;transform-origin:0 0;transform:scaleX(0.915);">HOP001</div>
<div class="t" style="left:455.80px;top:544.35px;font-size:14px;line-height:14px;font-weight:normal;color:#2a2b36;transform-origin:0 0;transform:scaleX(0.936);">Hope Works (Pty) Ltd</div>
<div class="t" style="left:689.40px;top:544.35px;font-size:14px;line-height:14px;font-weight:normal;color:#2a2b36;transform-origin:0 0;transform:scaleX(0.95);">test</div>
<div class="t" style="right:364.50px;top:544.35px;font-size:14px;line-height:14px;font-weight:normal;color:#2a2b36;transform-origin:100% 0;transform:scaleX(0.966);">74.89</div>
<div class="t" style="left:926.10px;top:544.35px;font-size:14px;line-height:14px;font-weight:normal;color:#2a2b36;transform-origin:0 0;transform:scaleX(0.946);">Printed</div>
<div class="t" style="left:1019.40px;top:544.35px;font-size:14px;line-height:14px;font-weight:normal;color:#2a2b36;transform-origin:0 0;transform:scaleX(0.875);">ZAR</div>
<div class="t" style="left:257.30px;top:570.62px;font-size:14px;line-height:14px;font-weight:normal;color:#2a2b36;transform-origin:0 0;transform:scaleX(0.951);">INV0000529</div>
<div class="t" style="left:342.40px;top:570.62px;font-size:14px;line-height:14px;font-weight:normal;color:#2a2b36;transform-origin:0 0;transform:scaleX(0.915);">HOP001</div>
<div class="t" style="left:455.80px;top:570.62px;font-size:14px;line-height:14px;font-weight:normal;color:#2a2b36;transform-origin:0 0;transform:scaleX(0.936);">Hope Works (Pty) Ltd</div>
<div class="t" style="left:689.40px;top:570.62px;font-size:14px;line-height:14px;font-weight:normal;color:#2a2b36;transform-origin:0 0;transform:scaleX(0.95);">test</div>
<div class="t" style="right:364.50px;top:570.62px;font-size:14px;line-height:14px;font-weight:normal;color:#2a2b36;transform-origin:100% 0;transform:scaleX(0.966);">0.00</div>
<div class="t" style="left:926.10px;top:570.62px;font-size:14px;line-height:14px;font-weight:normal;color:#2a2b36;transform-origin:0 0;transform:scaleX(0.946);">Printed</div>
<div class="t" style="left:1019.40px;top:570.62px;font-size:14px;line-height:14px;font-weight:normal;color:#2a2b36;transform-origin:0 0;transform:scaleX(0.875);">ZAR</div>
<div class="t" style="left:257.30px;top:596.89px;font-size:14px;line-height:14px;font-weight:normal;color:#2a2b36;transform-origin:0 0;transform:scaleX(0.951);">INV0000528</div>
<div class="t" style="left:342.40px;top:596.89px;font-size:14px;line-height:14px;font-weight:normal;color:#2a2b36;transform-origin:0 0;transform:scaleX(0.915);">PIN0001</div>
<div class="t" style="left:455.80px;top:596.89px;font-size:14px;line-height:14px;font-weight:normal;color:#2a2b36;transform-origin:0 0;transform:scaleX(0.936);">Pink Shoes</div>
<div class="t" style="left:689.40px;top:596.89px;font-size:14px;line-height:14px;font-weight:normal;color:#2a2b36;transform-origin:0 0;transform:scaleX(0.95);">Swap out Invoice</div>
<div class="t" style="right:364.50px;top:596.89px;font-size:14px;line-height:14px;font-weight:normal;color:#2a2b36;transform-origin:100% 0;transform:scaleX(0.966);">5,175.00</div>
<div class="t" style="left:926.10px;top:596.89px;font-size:14px;line-height:14px;font-weight:normal;color:#2a2b36;transform-origin:0 0;transform:scaleX(0.946);">Printed</div>
<div class="t" style="left:1019.40px;top:596.89px;font-size:14px;line-height:14px;font-weight:normal;color:#2a2b36;transform-origin:0 0;transform:scaleX(0.875);">ZAR</div>
<div class="t" style="left:257.30px;top:623.16px;font-size:14px;line-height:14px;font-weight:normal;color:#2a2b36;transform-origin:0 0;transform:scaleX(0.951);">INV0000526</div>
<div class="t" style="left:342.40px;top:623.16px;font-size:14px;line-height:14px;font-weight:normal;color:#2a2b36;transform-origin:0 0;transform:scaleX(0.915);">PIN0001</div>
<div class="t" style="left:455.80px;top:623.16px;font-size:14px;line-height:14px;font-weight:normal;color:#2a2b36;transform-origin:0 0;transform:scaleX(0.936);">Pink Shoes</div>
<div class="t" style="left:689.40px;top:623.16px;font-size:14px;line-height:14px;font-weight:normal;color:#2a2b36;transform-origin:0 0;transform:scaleX(0.95);">new copier</div>
<div class="t" style="right:364.50px;top:623.16px;font-size:14px;line-height:14px;font-weight:normal;color:#2a2b36;transform-origin:100% 0;transform:scaleX(0.966);">241,895.60</div>
<div class="t" style="left:926.10px;top:623.16px;font-size:14px;line-height:14px;font-weight:normal;color:#2a2b36;transform-origin:0 0;transform:scaleX(0.946);">Printed</div>
<div class="t" style="left:1019.40px;top:623.16px;font-size:14px;line-height:14px;font-weight:normal;color:#2a2b36;transform-origin:0 0;transform:scaleX(0.875);">ZAR</div>
<div class="t" style="left:257.30px;top:649.43px;font-size:14px;line-height:14px;font-weight:normal;color:#2a2b36;transform-origin:0 0;transform:scaleX(0.951);">INV0000525</div>
<div class="t" style="left:342.40px;top:649.43px;font-size:14px;line-height:14px;font-weight:normal;color:#2a2b36;transform-origin:0 0;transform:scaleX(0.915);">BIG0001</div>
<div class="t" style="left:455.80px;top:649.43px;font-size:14px;line-height:14px;font-weight:normal;color:#2a2b36;transform-origin:0 0;transform:scaleX(0.936);">Big Bargains</div>
<div class="t" style="left:689.40px;top:649.43px;font-size:14px;line-height:14px;font-weight:normal;color:#2a2b36;transform-origin:0 0;transform:scaleX(0.95);">Test email</div>
<div class="t" style="right:364.50px;top:649.43px;font-size:14px;line-height:14px;font-weight:normal;color:#2a2b36;transform-origin:100% 0;transform:scaleX(0.966);">602.60</div>
<div class="t" style="left:926.10px;top:649.43px;font-size:14px;line-height:14px;font-weight:normal;color:#2a2b36;transform-origin:0 0;transform:scaleX(0.946);">Printed</div>
<div class="t" style="left:1019.40px;top:649.43px;font-size:14px;line-height:14px;font-weight:normal;color:#2a2b36;transform-origin:0 0;transform:scaleX(0.875);">ZAR</div>
<div class="t" style="left:257.30px;top:675.70px;font-size:14px;line-height:14px;font-weight:normal;color:#2a2b36;transform-origin:0 0;transform:scaleX(0.951);">INV0000524</div>
<div class="t" style="left:342.40px;top:675.70px;font-size:14px;line-height:14px;font-weight:normal;color:#2a2b36;transform-origin:0 0;transform:scaleX(0.915);">HOP001</div>
<div class="t" style="left:455.80px;top:675.70px;font-size:14px;line-height:14px;font-weight:normal;color:#2a2b36;transform-origin:0 0;transform:scaleX(0.936);">Hope Works (Pty) Ltd</div>
<div class="t" style="left:689.40px;top:675.70px;font-size:14px;line-height:14px;font-weight:normal;color:#2a2b36;transform-origin:0 0;transform:scaleX(0.95);">test</div>
<div class="t" style="right:364.50px;top:675.70px;font-size:14px;line-height:14px;font-weight:normal;color:#2a2b36;transform-origin:100% 0;transform:scaleX(0.966);">14,651.95</div>
<div class="t" style="left:926.10px;top:675.70px;font-size:14px;line-height:14px;font-weight:normal;color:#2a2b36;transform-origin:0 0;transform:scaleX(0.946);">Printed</div>
<div class="t" style="left:1019.40px;top:675.70px;font-size:14px;line-height:14px;font-weight:normal;color:#2a2b36;transform-origin:0 0;transform:scaleX(0.875);">ZAR</div>
<div class="t" style="left:1099.60px;top:675.70px;font-size:14px;line-height:14px;font-weight:normal;color:#2a2b36;transform-origin:0 0;transform:scaleX(0.935);">CN0000139 (P)</div>
<div class="t" style="left:257.30px;top:701.97px;font-size:14px;line-height:14px;font-weight:normal;color:#2a2b36;transform-origin:0 0;transform:scaleX(0.951);">INV0000523</div>
<div class="t" style="left:342.40px;top:701.97px;font-size:14px;line-height:14px;font-weight:normal;color:#2a2b36;transform-origin:0 0;transform:scaleX(0.915);">HOP001</div>
<div class="t" style="left:455.80px;top:701.97px;font-size:14px;line-height:14px;font-weight:normal;color:#2a2b36;transform-origin:0 0;transform:scaleX(0.936);">Hope Works (Pty) Ltd</div>
<div class="t" style="left:689.40px;top:701.97px;font-size:14px;line-height:14px;font-weight:normal;color:#2a2b36;transform-origin:0 0;transform:scaleX(0.95);">test</div>
<div class="t" style="right:364.50px;top:701.97px;font-size:14px;line-height:14px;font-weight:normal;color:#2a2b36;transform-origin:100% 0;transform:scaleX(0.966);">14,674.90</div>
<div class="t" style="left:926.10px;top:701.97px;font-size:14px;line-height:14px;font-weight:normal;color:#2a2b36;transform-origin:0 0;transform:scaleX(0.946);">Printed</div>
<div class="t" style="left:1019.40px;top:701.97px;font-size:14px;line-height:14px;font-weight:normal;color:#2a2b36;transform-origin:0 0;transform:scaleX(0.875);">ZAR</div>
<div class="t" style="left:1099.60px;top:701.97px;font-size:14px;line-height:14px;font-weight:normal;color:#2a2b36;transform-origin:0 0;transform:scaleX(0.935);">CN0000138 (P)</div>
<div class="t" style="left:257.30px;top:728.24px;font-size:14px;line-height:14px;font-weight:normal;color:#2a2b36;transform-origin:0 0;transform:scaleX(0.951);">INV0000522</div>
<div class="t" style="left:342.40px;top:728.24px;font-size:14px;line-height:14px;font-weight:normal;color:#2a2b36;transform-origin:0 0;transform:scaleX(0.915);">TIA001</div>
<div class="t" style="left:455.80px;top:728.24px;font-size:14px;line-height:14px;font-weight:normal;color:#2a2b36;transform-origin:0 0;transform:scaleX(0.936);">Titan Group</div>
<div class="t" style="left:689.40px;top:728.24px;font-size:14px;line-height:14px;font-weight:normal;color:#2a2b36;transform-origin:0 0;transform:scaleX(0.95);">1234</div>
<div class="t" style="right:364.50px;top:728.24px;font-size:14px;line-height:14px;font-weight:normal;color:#2a2b36;transform-origin:100% 0;transform:scaleX(0.966);">575.00</div>
<div class="t" style="left:926.10px;top:728.24px;font-size:14px;line-height:14px;font-weight:normal;color:#2a2b36;transform-origin:0 0;transform:scaleX(0.946);">Printed</div>
<div class="t" style="left:1019.40px;top:728.24px;font-size:14px;line-height:14px;font-weight:normal;color:#2a2b36;transform-origin:0 0;transform:scaleX(0.875);">ZAR</div>
<div class="t" style="left:257.30px;top:754.51px;font-size:14px;line-height:14px;font-weight:normal;color:#2a2b36;transform-origin:0 0;transform:scaleX(0.951);">INV0000521</div>
<div class="t" style="left:342.40px;top:754.51px;font-size:14px;line-height:14px;font-weight:normal;color:#2a2b36;transform-origin:0 0;transform:scaleX(0.915);">GET001</div>
<div class="t" style="left:455.80px;top:754.51px;font-size:14px;line-height:14px;font-weight:normal;color:#2a2b36;transform-origin:0 0;transform:scaleX(0.936);">Get Up and Go</div>
<div class="t" style="left:689.40px;top:754.51px;font-size:14px;line-height:14px;font-weight:normal;color:#2a2b36;transform-origin:0 0;transform:scaleX(0.95);">test</div>
<div class="t" style="right:364.50px;top:754.51px;font-size:14px;line-height:14px;font-weight:normal;color:#2a2b36;transform-origin:100% 0;transform:scaleX(0.966);">621.00</div>
<div class="t" style="left:926.10px;top:754.51px;font-size:14px;line-height:14px;font-weight:normal;color:#2a2b36;transform-origin:0 0;transform:scaleX(0.946);">Printed</div>
<div class="t" style="left:1019.40px;top:754.51px;font-size:14px;line-height:14px;font-weight:normal;color:#2a2b36;transform-origin:0 0;transform:scaleX(0.875);">ZAR</div>
<div class="t" style="left:257.30px;top:780.78px;font-size:14px;line-height:14px;font-weight:normal;color:#2a2b36;transform-origin:0 0;transform:scaleX(0.951);">INV0000520</div>
<div class="t" style="left:342.40px;top:780.78px;font-size:14px;line-height:14px;font-weight:normal;color:#2a2b36;transform-origin:0 0;transform:scaleX(0.915);">GET001</div>
<div class="t" style="left:455.80px;top:780.78px;font-size:14px;line-height:14px;font-weight:normal;color:#2a2b36;transform-origin:0 0;transform:scaleX(0.936);">Get Up and Go</div>
<div class="t" style="left:689.40px;top:780.78px;font-size:14px;line-height:14px;font-weight:normal;color:#2a2b36;transform-origin:0 0;transform:scaleX(0.95);">1234</div>
<div class="t" style="right:364.50px;top:780.78px;font-size:14px;line-height:14px;font-weight:normal;color:#2a2b36;transform-origin:100% 0;transform:scaleX(0.966);">1,104.00</div>
<div class="t" style="left:926.10px;top:780.78px;font-size:14px;line-height:14px;font-weight:normal;color:#2a2b36;transform-origin:0 0;transform:scaleX(0.946);">Printed</div>
<div class="t" style="left:1019.40px;top:780.78px;font-size:14px;line-height:14px;font-weight:normal;color:#2a2b36;transform-origin:0 0;transform:scaleX(0.875);">ZAR</div>
<div class="t" style="left:257.30px;top:807.05px;font-size:14px;line-height:14px;font-weight:normal;color:#2a2b36;transform-origin:0 0;transform:scaleX(0.951);">INV0000519</div>
<div class="t" style="left:342.40px;top:807.05px;font-size:14px;line-height:14px;font-weight:normal;color:#2a2b36;transform-origin:0 0;transform:scaleX(0.915);">GET001</div>
<div class="t" style="left:455.80px;top:807.05px;font-size:14px;line-height:14px;font-weight:normal;color:#2a2b36;transform-origin:0 0;transform:scaleX(0.936);">Get Up and Go</div>
<div class="t" style="left:689.40px;top:807.05px;font-size:14px;line-height:14px;font-weight:normal;color:#2a2b36;transform-origin:0 0;transform:scaleX(0.95);">1234</div>
<div class="t" style="right:364.50px;top:807.05px;font-size:14px;line-height:14px;font-weight:normal;color:#2a2b36;transform-origin:100% 0;transform:scaleX(0.966);">993.60</div>
<div class="t" style="left:926.10px;top:807.05px;font-size:14px;line-height:14px;font-weight:normal;color:#2a2b36;transform-origin:0 0;transform:scaleX(0.946);">Printed</div>
<div class="t" style="left:1019.40px;top:807.05px;font-size:14px;line-height:14px;font-weight:normal;color:#2a2b36;transform-origin:0 0;transform:scaleX(0.875);">ZAR</div>
<div class="t" style="left:257.30px;top:833.32px;font-size:14px;line-height:14px;font-weight:normal;color:#2a2b36;transform-origin:0 0;transform:scaleX(0.951);">INV0000518</div>
<div class="t" style="left:342.40px;top:833.32px;font-size:14px;line-height:14px;font-weight:normal;color:#2a2b36;transform-origin:0 0;transform:scaleX(0.915);">NEW102</div>
<div class="t" style="left:455.80px;top:833.32px;font-size:14px;line-height:14px;font-weight:normal;color:#2a2b36;transform-origin:0 0;transform:scaleX(0.936);">New Customer</div>
<div class="t" style="left:689.40px;top:833.32px;font-size:14px;line-height:14px;font-weight:normal;color:#2a2b36;transform-origin:0 0;transform:scaleX(0.95);">test</div>
<div class="t" style="right:364.50px;top:833.32px;font-size:14px;line-height:14px;font-weight:normal;color:#2a2b36;transform-origin:100% 0;transform:scaleX(0.966);">621.00</div>
<div class="t" style="left:926.10px;top:833.32px;font-size:14px;line-height:14px;font-weight:normal;color:#2a2b36;transform-origin:0 0;transform:scaleX(0.946);">Printed</div>
<div class="t" style="left:1019.40px;top:833.32px;font-size:14px;line-height:14px;font-weight:normal;color:#2a2b36;transform-origin:0 0;transform:scaleX(0.875);">ZAR</div>
<svg style="left:238.5px;top:336.6px" width="7" height="10"><path d="M0 0L6 5L0 10Z" fill="#1a1a28"/></svg>
<div class="a" style="left:232.6px;top:848.2px;width:1040.6px;height:36.5px;background:linear-gradient(#e9eaed,#e1e2e6);border-top:1px solid #d0d1d5"></div>
<div class="a" style="left:1252.3px;top:245.8px;width:20.9px;height:602.4px;background:#f3f4f6"></div>
<svg style="left:1259px;top:254px" width="9" height="6"><path d="M0 5H8L4 0Z" fill="#85878e"/></svg>
<div class="a" style="left:1258px;top:267.5px;width:9.5px;height:23px;border:1px solid #a9abb2;border-radius:5px;background:linear-gradient(90deg,#fafafb,#e3e4e8)"></div>
<svg style="left:1259px;top:835px" width="9" height="6"><path d="M0 0H8L4 5Z" fill="#85878e"/></svg>
<div class="a" style="left:232.6px;top:884.7px;width:1040.6px;height:21.6px;background:#f5f5f7"></div>
<svg style="left:240px;top:891px" width="6" height="9"><path d="M5 0V8L0 4Z" fill="#85878e"/></svg>
<div class="a" style="left:253px;top:891.4px;width:472px;height:9px;border:1px solid #a9abb2;border-radius:5px;background:linear-gradient(#f8f8f9,#e2e3e7)"></div>
<svg style="left:1261px;top:891px" width="6" height="9"><path d="M0 0V8L5 4Z" fill="#85878e"/></svg>
<svg style="left:0;top:0" width="1280" height="80">
<defs><linearGradient id="hx17" x1="0" y1="0" x2="1" y2="1"><stop offset="0" stop-color="#7c7c7e"/><stop offset="0.5" stop-color="#5a5a5c"/><stop offset="1" stop-color="#3a3a3c"/></linearGradient></defs>
<polygon points="17.3,7.299999999999999 26.05,12.25 26.05,22.150000000000002 17.3,27.1 8.55,22.150000000000002 8.55,12.25" fill="url(#hx17)"/>
<rect x="9.787500000000001" y="14.395" width="15.025" height="3.795" fill="#ececec"/>
<rect x="10.860000000000001" y="16.375" width="4.125" height="0.99" fill="#4a4a4a"/>
<rect x="15.155000000000001" y="16.375" width="4.5375000000000005" height="0.99" fill="#4a4a4a"/>
<rect x="21.095" y="16.375" width="4.3725000000000005" height="0.99" fill="#4a4a4a"/>
<rect x="9.375" y="18.685" width="15.85" height="0.7425" fill="#2e2e30"/>
<ellipse cx="14.825000000000001" cy="22.15" rx="2.475" ry="2.6400000000000006" fill="#7a3a3a" opacity="0.55"/>
</svg>
<svg style="left:0;top:0" width="1280" height="80">
<defs><linearGradient id="hx43" x1="0" y1="0" x2="1" y2="1"><stop offset="0" stop-color="#7c7c7e"/><stop offset="0.5" stop-color="#5a5a5c"/><stop offset="1" stop-color="#3a3a3c"/></linearGradient></defs>
<polygon points="43.6,34.1 54.5,40.1 54.5,52.1 43.6,58.1 32.7,52.1 32.7,40.1" fill="url(#hx43)"/>
<rect x="34.2" y="42.7" width="18.8" height="4.6" fill="#ececec"/>
<rect x="35.5" y="45.1" width="5.0" height="1.2" fill="#4a4a4a"/>
<rect x="41.0" y="45.1" width="5.5" height="1.2" fill="#4a4a4a"/>
<rect x="48.2" y="45.1" width="5.3" height="1.2" fill="#4a4a4a"/>
<rect x="33.7" y="47.9" width="19.8" height="0.9" fill="#2e2e30"/>
<ellipse cx="40.6" cy="52.1" rx="3.0" ry="3.2" fill="#7a3a3a" opacity="0.55"/>
</svg>
<svg style="left:55px;top:13px" width="10" height="8"><rect x="0.5" y="0" width="8.5" height="1.6" fill="#1e1e2e"/><path d="M0.8 2.8H8.8L4.8 7.5Z" fill="#1e1e2e"/></svg>
<div class="a" style="left:1160.3px;top:8.8px;width:35.1px;height:16.8px;border:1px solid #9a9ca4;border-radius:3px;background:linear-gradient(#eeeef1,#d8d9de)"></div>
<div class="a" style="left:1199px;top:8.8px;width:34.8px;height:16.8px;border:1px solid #9a9ca4;border-radius:3px;background:linear-gradient(#eeeef1,#d8d9de)"></div>
<div class="a" style="left:1237.5px;top:8.8px;width:35.0px;height:16.8px;border:1px solid #9a9ca4;border-radius:3px;background:linear-gradient(#eeeef1,#d8d9de)"></div>
<div class="a" style="left:1172px;top:18.8px;width:11.5px;height:2.2px;background:#6a6c74"></div>
<div class="a" style="left:1211px;top:13.1px;width:11px;height:7.5px;border:2px solid #6a6c74;border-top-width:2.6px"></div>
<svg style="left:1250px;top:12.5px" width="12" height="9"><path d="M1 0.8L10.5 8.2M10.5 0.8L1 8.2" stroke="#6a6c74" stroke-width="2.2"/></svg>
<div class="a" style="left:1181px;top:49.2px;width:11.3px;height:2px;background:#85878f"></div>
<svg style="left:1214px;top:41px" width="15" height="12"><rect x="5" y="1" width="8.5" height="6" fill="none" stroke="#85878f" stroke-width="1.8"/><rect x="1" y="4.8" width="8.5" height="6" fill="#d3d4d9" stroke="#85878f" stroke-width="1.8"/></svg>
<svg style="left:1251px;top:42.5px" width="12" height="9"><path d="M1 0.8L10.5 8.2M10.5 0.8L1 8.2" stroke="#85878f" stroke-width="2.2"/></svg>
<svg style="left:1118px;top:40px" width="22" height="16"><path d="M13.5 7.5 Q16.5 6.5 17 9 L16.5 12 Q15 14.5 13.5 13" fill="none" stroke="#50525e" stroke-width="1.2"/><path d="M14.5 14.5 L16.5 15.5" stroke="#30323e" stroke-width="1"/><circle cx="7.6" cy="6.9" r="6.2" fill="#f4f4f6" stroke="#d0d0d6" stroke-width="0.8"/><path d="M5.5 3.6L10 6.9L5.5 10.2Z" fill="#8e9098"/></svg>
<svg style="left:18px;top:69px" width="38" height="38" viewBox="0 0 38 38">
<defs><linearGradient id="addg" x1="0" y1="0" x2="0" y2="1"><stop offset="0" stop-color="#cde9f9"/><stop offset="0.45" stop-color="#7db9e8"/><stop offset="1" stop-color="#3d8ad2"/></linearGradient></defs>
<circle cx="18.45" cy="18.4" r="16.8" fill="url(#addg)" stroke="#4f82b6" stroke-width="1.1"/>
<path d="M14.3 9 H22.6 V14.8 H28.2 V22.2 H22.6 V27.8 H14.3 V22.2 H8.6 V14.8 H14.3 Z" fill="#f2f6fa" stroke="#2e5c90" stroke-width="1.5" stroke-linejoin="round"/>
</svg>
<svg style="left:76px;top:68px" width="38" height="40" viewBox="0 0 38 40">
<path d="M9.5 1 H29 V34.5 H1.7 V9 Z" fill="#d9d9d9" stroke="#c4c4c4" stroke-width="1"/>
<path d="M9.5 1 V9 H1.7" fill="#e6e6e6" stroke="#c4c4c4" stroke-width="1"/>
<path d="M9 37.8 L11 31 L31.5 12 L35.5 16 L15 35 Z" fill="#cfcfcf" stroke="#b4b4b4" stroke-width="1"/>
<path d="M9 37.8 L11 31 L15 35 Z" fill="#bdbdbd"/>
</svg>
<svg style="left:151px;top:68px" width="40" height="40" viewBox="0 0 40 40">
<defs><linearGradient id="noteg" x1="0" y1="0" x2="0" y2="1"><stop offset="0" stop-color="#f2be5a"/><stop offset="1" stop-color="#fde9b8"/></linearGradient></defs>
<rect x="1.3" y="2" width="35" height="34.7" rx="2" fill="url(#noteg)" stroke="#d49a52" stroke-width="1.1"/>
<g stroke="#e6b561" stroke-width="0.8" opacity="0.8">
<path d="M2 7.5H36M2 10.5H36M2 13.5H36M2 16.5H36M2 19.5H36M2 22.5H36M2 25.5H36M2 28.5H36M2 31.5H36M2 34.3H36"/>
<path d="M29.4 2.5V36.3"/></g>
<circle cx="20.7" cy="6.6" r="5.4" fill="#4f86c0" stroke="#3b6696" stroke-width="0.8"/>
<circle cx="19.4" cy="5" r="1.8" fill="#a6c8ec"/>
</svg>
<svg style="left:231px;top:67px" width="34" height="40" viewBox="0 0 34 40">
<rect x="1.7" y="1.2" width="29.8" height="36.5" rx="1" fill="#f5f7fc" stroke="#8f97aa" stroke-width="1.3"/>
<rect x="6.6" y="5.5" width="19.6" height="7" fill="#8fc3ec" stroke="#4f7cb6" stroke-width="1"/>
<g stroke="#9ba3bd" stroke-width="1.7"><path d="M6.6 16H26.2M6.6 18.8H26.2M6.6 21.6H26.2M6.6 24.4H26.2M6.6 27.2H26.2M6.6 30H26.2M6.6 32.4H26.2"/></g>
</svg>
<svg style="left:311px;top:67px" width="40" height="40" viewBox="0 0 40 40">
<defs><linearGradient id="tblh" x1="0" y1="0" x2="0" y2="1"><stop offset="0" stop-color="#8cbcea"/><stop offset="1" stop-color="#4f8fd6"/></linearGradient>
<linearGradient id="wr" x1="0" y1="0" x2="1" y2="1"><stop offset="0" stop-color="#d6dade"/><stop offset="1" stop-color="#8a9096"/></linearGradient></defs>
<rect x="1.6" y="1.9" width="31.1" height="30.7" rx="1.5" fill="#eaf0f8" stroke="#6c85a8" stroke-width="1.2"/>
<rect x="2.2" y="2.5" width="29.9" height="7.8" fill="url(#tblh)"/>
<path d="M2 10.3H32.5M2 17.2H32.5M2 24.9H32.5M12 2V32.5M22.4 2V32.5" stroke="#a8b6c8" stroke-width="1"/>
<line x1="20" y1="21" x2="33.8" y2="34.6" stroke="#50565e" stroke-width="7" stroke-linecap="round"/>
<circle cx="19.6" cy="20.8" r="8.3" fill="#50565e"/>
<line x1="20" y1="21" x2="33.8" y2="34.6" stroke="url(#wr)" stroke-width="4.6" stroke-linecap="round"/>
<circle cx="19.6" cy="20.8" r="6.9" fill="url(#wr)"/>
<clipPath id="wclip"><circle cx="19.6" cy="20.8" r="8.6"/></clipPath><g clip-path="url(#wclip)"><rect x="-2.5" y="-7" width="5" height="11" fill="#eaf0f8" transform="translate(24.8 15.6) rotate(45)"/></g>
<circle cx="19.6" cy="20.8" r="2.2" fill="#eaf0f8" opacity="0"/>
</svg>
<svg style="left:400px;top:68px" width="40" height="40" viewBox="0 0 40 40">
<defs><linearGradient id="tileg" x1="0" y1="0" x2="0" y2="1"><stop offset="0" stop-color="#92c4ee"/><stop offset="1" stop-color="#4a8ed6"/></linearGradient></defs><rect x="1.7" y="1.4" width="16.4" height="10.3" rx="1.5" fill="url(#tileg)" stroke="#3e6ea8" stroke-width="1"/><rect x="19.8" y="1.4" width="17.4" height="10.3" rx="1.5" fill="url(#tileg)" stroke="#3e6ea8" stroke-width="1"/><rect x="1.7" y="13.4" width="16.4" height="10.4" rx="1.5" fill="url(#tileg)" stroke="#3e6ea8" stroke-width="1"/><rect x="19.8" y="13.4" width="17.4" height="10.4" rx="1.5" fill="url(#tileg)" stroke="#3e6ea8" stroke-width="1"/><rect x="1.7" y="25.6" width="16.4" height="11" rx="1.5" fill="url(#tileg)" stroke="#3e6ea8" stroke-width="1"/><rect x="19.8" y="25.6" width="17.4" height="11" rx="1.5" fill="url(#tileg)" stroke="#3e6ea8" stroke-width="1"/></svg>
<svg style="left:415.5px;top:133px" width="8" height="6"><path d="M0 0H7.4L3.7 4.6Z" fill="#1a1a28"/></svg>
<svg style="left:480px;top:67px" width="42" height="40" viewBox="0 0 42 40">
<defs><linearGradient id="prb" x1="0" y1="0" x2="0" y2="1"><stop offset="0" stop-color="#e8eef6"/><stop offset="1" stop-color="#b4c2d6"/></linearGradient>
<radialGradient id="qg" cx="0.4" cy="0.35" r="0.7"><stop offset="0" stop-color="#c4ea78"/><stop offset="1" stop-color="#4d9a1e"/></radialGradient></defs>
<rect x="10.2" y="4.1" width="14" height="13" fill="#f4f6fa" stroke="#8a96a8" stroke-width="1"/>
<rect x="2.1" y="15.3" width="33.5" height="19.8" rx="3" fill="url(#prb)" stroke="#7686a0" stroke-width="1.1"/>
<rect x="7.5" y="17.6" width="23.1" height="7.1" rx="2.5" fill="#56617e"/>
<rect x="9.7" y="29.5" width="18.8" height="8.1" fill="#5da3e2" stroke="#6e84a4" stroke-width="1"/>
<rect x="10.5" y="29.5" width="17.2" height="2.2" fill="#e6eef8"/>
<circle cx="30.5" cy="10.7" r="9" fill="url(#qg)" stroke="#4a8a20" stroke-width="0.7"/>
<text x="26.4" y="15.8" font-family="Liberation Sans" font-weight="bold" font-size="13.5" fill="#2a5a10">?</text>
</svg>
<svg style="left:564px;top:69px" width="38" height="38" viewBox="0 0 38 38">
<defs><linearGradient id="barg" x1="0" y1="0" x2="0" y2="1"><stop offset="0" stop-color="#a8d2f4"/><stop offset="1" stop-color="#6eaae4"/></linearGradient></defs>
<rect x="1.1" y="1.4" width="34.8" height="34.2" rx="1.5" fill="#f3f6fb" stroke="#87909f" stroke-width="1.3"/>
<rect x="6.1" y="6.2" width="24.8" height="6.6" rx="1" fill="url(#barg)" stroke="#4a78b0" stroke-width="1"/>
<rect x="6.1" y="15.2" width="24.8" height="6.6" rx="1" fill="url(#barg)" stroke="#4a78b0" stroke-width="1"/>
<rect x="6.1" y="24.2" width="24.8" height="6.6" rx="1" fill="url(#barg)" stroke="#4a78b0" stroke-width="1"/>
</svg>
<svg style="left:642px;top:67px" width="42" height="40" viewBox="0 0 42 40">
<path d="M8 2 H26.5 L34.7 10.2 V35.3 H8 Z" fill="#eef0f5" stroke="#8e9098" stroke-width="1.4" stroke-linejoin="round"/>
<path d="M26.5 2 V10.2 H34.7" fill="#f8f9fb" stroke="#8e9098" stroke-width="1.2"/>
<rect x="1.7" y="7.9" width="22.4" height="11.2" rx="1.5" fill="#128056"/>
<text x="3" y="16.8" font-family="Liberation Mono" font-weight="bold" font-size="9.6" fill="#b8f4d8" textLength="19.4">XLSX</text>
<rect x="21.6" y="20.5" width="17.5" height="17.5" rx="1.5" fill="#3e4a5e"/>
<rect x="24.6" y="21.5" width="11.3" height="7.2" fill="#c8ccd4"/>
<rect x="31.5" y="22.3" width="2.4" height="4.5" fill="#2a3242"/>
<rect x="24" y="30.6" width="12.6" height="6.5" fill="#8db0d8"/>
<rect x="24" y="30.6" width="12.6" height="3" fill="#f4f6fa"/>
</svg>
<svg style="left:846px;top:66px" width="50" height="40" viewBox="0 0 50 40">
<defs><linearGradient id="rfg" x1="0" y1="0" x2="0" y2="1"><stop offset="0" stop-color="#d4eefb"/><stop offset="0.5" stop-color="#a8d4f2"/><stop offset="1" stop-color="#5c9ad8"/></linearGradient></defs>
<path d="M32.8 35.3 A15 15 0 0 1 12.7 21.2 L7.75 20.8 L16.2 6.6 L24.6 20.8 L19.7 21.2 A8 8 0 0 0 30.4 28.7 Z" fill="url(#rfg)" stroke="#4d6c92" stroke-width="1.2" stroke-linejoin="round"/>
<path d="M22.6 7.1 A15 15 0 0 1 42.7 21.2 L47.6 21.8 L39 35.9 L30.6 21.8 L35.7 21.2 A8 8 0 0 0 25 13.7 Z" fill="url(#rfg)" stroke="#4d6c92" stroke-width="1.2" stroke-linejoin="round"/>
</svg>
<svg style="left:270px;top:163px" width="7" height="7"><path d="M6 0V6H0Z" fill="#b4b7be"/></svg>
<svg style="left:459px;top:163px" width="7" height="7"><path d="M6 0V6H0Z" fill="#b4b7be"/></svg>
<svg style="left:687px;top:163px" width="7" height="7"><path d="M6 0V6H0Z" fill="#b4b7be"/></svg>
<svg style="left:900px;top:163px" width="7" height="7"><path d="M6 0V6H0Z" fill="#b4b7be"/></svg>
<svg style="left:0;top:0" width="1280" height="200"><path d="M1256.9 155.3 L1264.6 163 L1261.3 166 L1256.9 161.8 L1252.6 166 L1249.4 163 Z" fill="#e8ecf4" stroke="#6a6c74" stroke-width="1.2" stroke-linejoin="round"/></svg>
<svg style="left:206px;top:189px" width="12" height="12"><rect x="3.7" y="1" width="5.3" height="6.4" fill="#8a8c94"/><rect x="4.4" y="1.5" width="1.2" height="5.5" fill="#e0e1e6"/><path d="M1.3 7.9H10.2" stroke="#8a8c94" stroke-width="1.3"/><path d="M6 8V11" stroke="#8a8c94" stroke-width="1.2"/></svg>
<svg style="left:207px;top:211px" width="16" height="16"><circle cx="9.6" cy="7.3" r="4.1" fill="none" stroke="#3a3c46" stroke-width="1.4"/><path d="M6.6 10.3L2 14.8" stroke="#3a3c46" stroke-width="1.6"/></svg>
<div class="a" style="left:780px;top:913px;width:1px;height:25px;background:#b6b8bf"></div>
<div class="a" style="left:781px;top:913px;width:1px;height:25px;background:#f0f1f3"></div>
<div class="a" style="left:897.5px;top:913px;width:1px;height:25px;background:#b6b8bf"></div>
<div class="a" style="left:898.5px;top:913px;width:1px;height:25px;background:#f0f1f3"></div>
<div class="a" style="left:989px;top:913px;width:1px;height:25px;background:#b6b8bf"></div>
<div class="a" style="left:990px;top:913px;width:1px;height:25px;background:#f0f1f3"></div>
<div class="a" style="left:1119.8px;top:913px;width:1px;height:25px;background:#b6b8bf"></div>
<div class="a" style="left:1120.8px;top:913px;width:1px;height:25px;background:#f0f1f3"></div>
<div class="t" style="left:792.70px;top:918.65px;font-size:14px;line-height:14px;font-weight:normal;color:#30323e;transform:scaleX(0.9517);transform-origin:0 0;">User : JulandaK</div>
<div class="t" style="left:908.20px;top:918.65px;font-size:14px;line-height:14px;font-weight:normal;color:#30323e;transform:scaleX(0.9960);transform-origin:0 0;">03/03/2021</div>
<div class="t" style="left:999.00px;top:918.65px;font-size:14px;line-height:14px;font-weight:normal;color:#30323e;transform:scaleX(1.0080);transform-origin:0 0;">Version : 2.4.0.11</div>
<div class="t" style="left:1129.40px;top:918.65px;font-size:14px;line-height:14px;font-weight:normal;color:#30323e;transform:scaleX(0.9266);transform-origin:0 0;">Example Company</div>
<svg style="left:1259px;top:925px" width="12" height="12"><path d="M1 11L11 1M5 11L11 5M9 11L11 9" stroke="#a0a2aa" stroke-width="1.1"/></svg>
<svg style="left:0;top:0" width="1280" height="948">
<line x1="255" y1="22.9" x2="419" y2="18.2" stroke="#dfe6fb" stroke-width="5.5"/>
<line x1="255" y1="22.9" x2="419" y2="18.2" stroke="#3f62d6" stroke-width="3.4"/>
<path d="M417.2 11.4 L434.3 17.7 L417.2 24.9 Z" fill="#3f62d6"/>
<circle cx="240.95" cy="22.65" r="15.6" fill="#e4ebff" opacity="0.8"/>
<circle cx="240.95" cy="22.65" r="15.1" fill="#3d66e0"/>
<text x="240.6" y="29.1" text-anchor="middle" font-family="Liberation Sans" font-size="17" fill="#0a0a1a">8</text>
<line x1="1020" y1="156.2" x2="852" y2="137.5" stroke="#dfe6fb" stroke-width="5.5"/>
<line x1="1020" y1="156.2" x2="852" y2="137.5" stroke="#3f62d6" stroke-width="3.4"/>
<path d="M853.8 127.6 L836 132.6 L853.8 141.2 Z" fill="#3f62d6"/>
<line x1="1024" y1="171" x2="778" y2="320.5" stroke="#3d4fa8" stroke-width="1.3" stroke-dasharray="4.5 10.5"/>
<path d="M767.6 327 L778.5 313.5 L775.5 321.5 L784.5 324.5 Z" fill="#1e2a70" stroke="#1e2a70" stroke-width="0.8" stroke-linejoin="round"/>
<circle cx="1034.4" cy="159.9" r="15.6" fill="#e4ebff" opacity="0.8"/>
<circle cx="1034.4" cy="159.9" r="15.1" fill="#3d66e0"/>
<text x="1034.2" y="166.3" text-anchor="middle" font-family="Liberation Sans" font-size="17" fill="#0a0a1a">9</text>
</svg>
</body></html>
